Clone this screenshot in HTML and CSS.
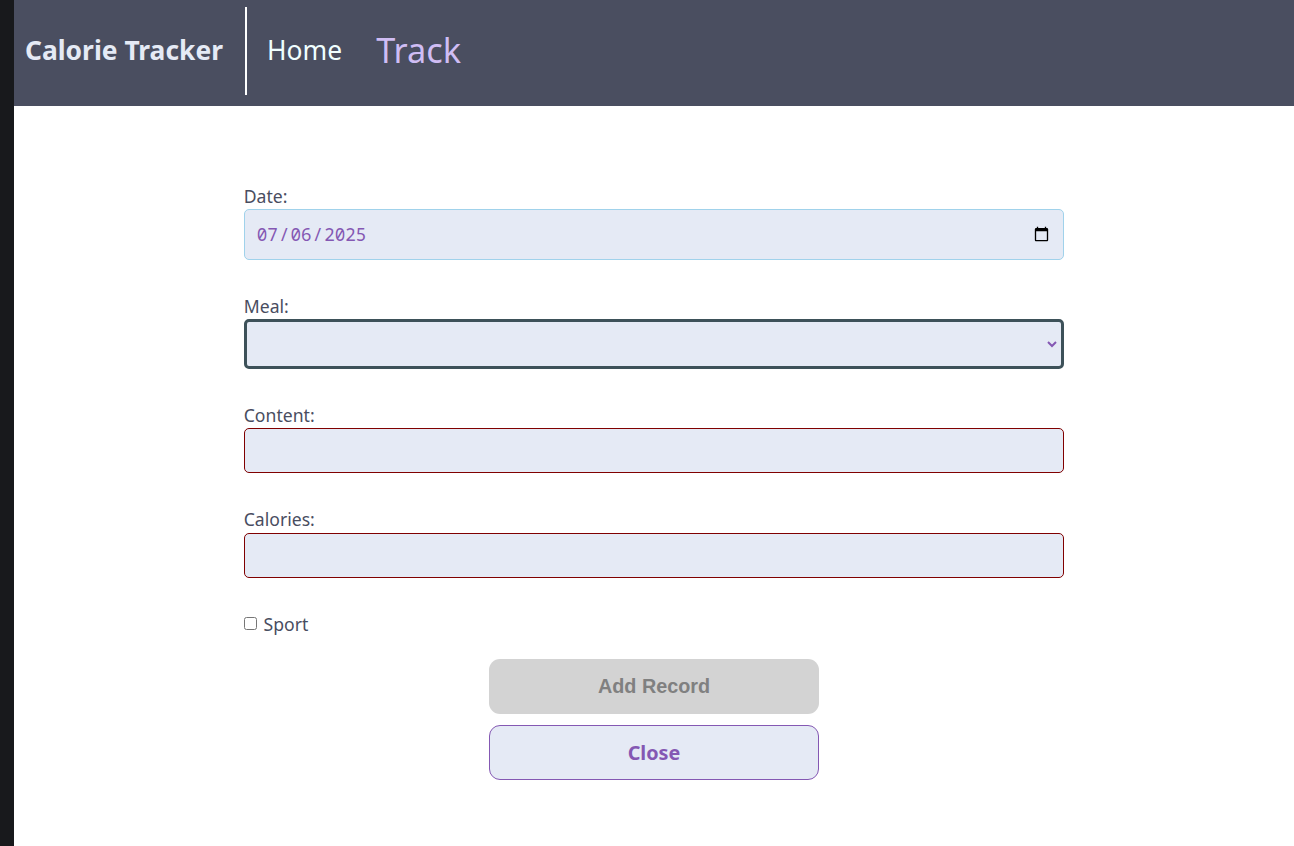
FILE: index.html
```html
<!DOCTYPE html>
<html lang="en">
<head>
<meta charset="utf-8">
<title>Calorie Tracker</title>
<link rel="stylesheet" href="styles.css">
</head>
<body>
<div class="edge"></div>
<div class="page">
<header class="nav">
<strong class="brand">Calorie Tracker</strong>
<nav class="links"><a class="link">Home</a><a class="link active">Track</a></nav>
</header>
<form class="form">
<div class="field field-date"><label for="date">Date:</label><input class="control date" id="date" type="date" value="2025-07-06"></div>
<div class="field field-meal"><label for="meal">Meal:</label><div class="control meal"><select class="meal-select" id="meal"><option></option></select></div></div>
<div class="field field-content"><label for="content">Content:</label><input class="control invalid" id="content" type="text"></div>
<div class="field field-calories"><label for="calories">Calories:</label><input class="control invalid" id="calories" type="number"></div>
<div class="check"><input id="sport" type="checkbox"><label for="sport">Sport</label></div>
<div class="actions">
<button class="button add" type="submit" disabled>Add Record</button>
<button class="button close" type="button">Close</button>
</div>
</form>
</div>
</body>
</html>
```
FILE: styles.css
```css
* { box-sizing: border-box; }
body {
  margin: 0;
  display: flex;
  height: 846px;
  overflow: hidden;
  background: #fff;
  color: #494d5f;
  font-family: "Noto Sans", sans-serif;
  font-size: 17.6px;
}
.edge { width: 14px; background: #18191c; }
.page { flex: 1; }
.nav {
  height: 106px;
  padding: 7px 11px 11px;
  display: flex;
  background: #4a4e60;
  color: #e5eaf5;
}
.brand {
  width: 222px;
  border-right: 2px solid #fff;
  font-size: 26.4px;
  line-height: 86px;
  white-space: nowrap;
}
.links { display: flex; padding-left: 20px; gap: 44px; line-height: 86px; }
.link { font-size: 26.4px; color: #f0ffff; }
.active { color: #d0bdf4; transform: scale(1.3); }
.form { width: 820.5px; margin: 77px auto 0; }
.field { display: flex; flex-direction: column; }
.field label { height: 26px; line-height: 27px; }
.field-date { height: 110px; }
.field-meal { height: 109px; }
.field-content { height: 105px; }
.field-calories { height: 105px; }
.field-calories label { line-height: 24px; }
.control {
  width: 100%;
  height: 45px;
  margin: 0;
  padding: 0 11px;
  border: 1px solid #800000;
  border-radius: 5px;
  outline: 0;
  background: #e5eaf5;
  color: #8458b3;
  font: 17.6px "Noto Sans", sans-serif;
}
.date { height: 51px; padding-bottom: 1px; border-color: #a0d2eb; font-family: "Noto Sans Mono", monospace; }
.date::-webkit-calendar-picker-indicator { transform: translateY(1px); }
.meal { display: flex; height: 50px; border: 3px solid #3d5159; padding: 0 1px 0 0; }
.meal-select { flex: 1; border: 0; outline: 0; background: transparent; color: #8458b3; font: inherit; }
.check { display: flex; align-items: center; height: 24px; }
.check input { width: 13px; height: 13px; margin: 0 6.8px 2px 0; }
.actions { display: flex; flex-direction: column; align-items: center; gap: 11px; margin-top: 23px; }
.button { width: 330px; height: 55px; border-radius: 11px; font: bold 19.8px "Noto Sans", sans-serif; }
.add { border: 0; background: #d3d3d3; color: #808080; font-family: "Liberation Sans", sans-serif; }
.close { border: 1px solid #8458b3; background: #e5eaf5; color: #8458b3; }
```
